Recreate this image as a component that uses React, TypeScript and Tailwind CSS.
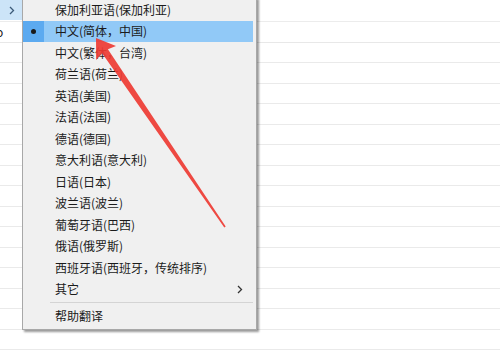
import React from "react";

const languages = [
  "保加利亚语(保加利亚)",
  "中文(简体，中国)",
  "中文(繁体，台湾)",
  "荷兰语(荷兰)",
  "英语(美国)",
  "法语(法国)",
  "德语(德国)",
  "意大利语(意大利)",
  "日语(日本)",
  "波兰语(波兰)",
  "葡萄牙语(巴西)",
  "俄语(俄罗斯)",
  "西班牙语(西班牙，传统排序)",
];

const Chevron = ({ className }: { className?: string }) => (
  <svg width="6" height="9" viewBox="0 0 6 9" className={className}>
    <polyline points="1,1 4.5,4.5 1,8" fill="none" stroke="currentColor" strokeWidth="1.3" />
  </svg>
);

const MenuRow = ({ label, selected, sub }: { label: string; selected?: boolean; sub?: boolean }) => {
  return (
    <div className={"flex h-[21.5px] items-center " + (selected ? "bg-[#91c9f7]" : "")}>
      <div className={"flex h-full w-[21px] items-center justify-center " + (selected ? "bg-[#5caaf0]" : "")}>
        {selected && <div className="h-[5px] w-[5px] rounded-full bg-[#1a1a1a]" />}
      </div>
      <div className="flex-1 pl-[11px] text-[12px] leading-none text-[#1b1b1b]">{label}</div>
      {sub && <Chevron className="mr-[10px] text-[#333]" />}
    </div>
  );
};

const App = () => {
  const rows = Array.from({ length: 16 });

  return (
    <div
      className="relative h-[359px] w-[500px] overflow-hidden bg-white"
      style={{ fontFamily: '"Noto Sans CJK SC", "Liberation Sans", sans-serif' }}
    >
      {/* list behind the menu */}
      <div className="flex flex-col">
        <div className="h-[22px] border-b border-[#ececec]">
          <div className="flex h-[20px] w-[22px] items-center justify-center bg-[#cce4f8]">
            <Chevron className="ml-[2px] text-[#3c5a78]" />
          </div>
        </div>
        <div className="flex h-[20.5px] items-center border-b border-[#e8e8e8]">
          <span className="ml-[-4px] text-[12px] text-[#222]">o</span>
        </div>
        {rows.map((_, i) => (
          <div key={i} className="h-[20.5px] border-b border-[#eaeaea]" />
        ))}
      </div>

      {/* context menu */}
      <div className="absolute left-[22px] top-[-3px] w-[235px] border border-[#a8a8a8] bg-[#f0f0f0] pb-[2.5px] pr-[3px] pt-[1px] shadow-[2px_2px_2px_rgba(0,0,0,0.4)]">
        {languages.map((l, i) => (
          <MenuRow key={l} label={l} selected={i === 1} />
        ))}
        <MenuRow label="其它" sub />
        <div className="pb-[2.5px] pl-[27px] pt-[1.5px]">
          <div className="h-px bg-[#d4d4d4]" />
        </div>
        <MenuRow label="帮助翻译" />
      </div>

      {/* red annotation arrow */}
      <svg className="absolute left-0 top-0" width="500" height="359" viewBox="0 0 500 359">
        <polygon
          points="96,38 116,46 107.9,49.2 225.7,226.5 224.3,227.5 102.1,53.2 96.2,60"
          fill="#ee3b33"
          opacity="0.92"
        />
      </svg>
    </div>
  );
};

export default App;
